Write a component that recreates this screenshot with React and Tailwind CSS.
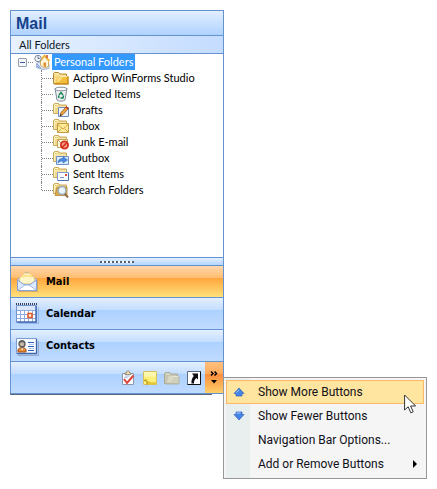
import React from "react";

function Folder({ faded }) {
  const back = faded ? "#c6c6b2" : "#f7dc8c";
  const front = faded ? "#d0cfba" : "#f3bd3c";
  const shade = faded ? "#b4b49f" : "#c98a1c";
  const edge = faded ? "#a5a996" : "#b5893c";
  return (
    <g>
      <path d="M.5 13.500V3.500l1-1h4l1.500 1.500h6.500v9.500z" fill={back} stroke={edge} />
      <path d="M2.500 13.500L4.500 6h10.500v7.500z" fill={front} />
      <path d="M15 6.500L15 14H1.500" fill="none" stroke={shade} strokeWidth={faded ? "1" : "1.500"} />
      <path d="M4.500 7L9 6.500h5M2 4h3.500" stroke={faded ? "#e6e6d8" : "#fff3bd"} />
      <path d="M3.500 12L5 7.500h5L6 12z" fill={faded ? "#dadac8" : "#fbdc82"} />
    </g>
  );
}

function SmallFolder() {
  return (
    <g>
      <path d="M.5 11.500V2.500l1-1h4l1 1.500h7v8.500z" fill="#f0d583" stroke="#c8aa60" />
      <path d="M1.500 3v8M2 2.500h3M2 5h11" stroke="#fdf2c4" />
    </g>
  );
}

const overlays = {
  drafts: (
    <g>
      <path d="M5.500 5.500h10v9h-10z" fill="#eef4ff" stroke="#6f8bc0" />
      <path d="M7 14l1-3.500L13.500 4.500l2 1.800L10 12.500z" fill="#f2a63a" stroke="#8a5427" strokeWidth=".8" />
      <path d="M13 5l2 1.800" stroke="#d5342c" strokeWidth="1.500" />
      <path d="M7 14l.6-2 1.200 1.200z" fill="#222" />
    </g>
  ),
  inbox: (
    <g>
      <path d="M4.500 5.500h11v9h-11z" fill="#ffec9a" stroke="#c39a3f" />
      <path d="M5 6.500l5 4.500L15 6.500M5 14l3.500-3.500M15 14l-3.500-3.500" fill="none" stroke="#d1a444" />
    </g>
  ),
  junk: (
    <g>
      <path d="M4.500 5.500h10v8h-10z" fill="#fff8dc" stroke="#c3a35c" />
      <path d="M5 6l4 4" stroke="#c7a55e" />
      <circle cx="11.500" cy="11" r="3.600" fill="#f4a48d" stroke="#d62f1c" strokeWidth="1.800" />
      <path d="M9 13.500l5-5" stroke="#d62f1c" strokeWidth="1.700" />
    </g>
  ),
  outbox: (
    <g>
      <path d="M3.500 6.500h12v8h-12z" fill="#dceaff" stroke="#6d91c9" />
      <path d="M5 13c0-3 1.500-4.500 5-4.500V6.500l4.500 3.500L10 13v-2c-2.500 0-3.800.5-5 2z" fill="#4c8ae0" stroke="#2f68b8" strokeWidth=".6" />
    </g>
  ),
  sent: (
    <g>
      <path d="M4.500 6.500h11v8h-11z" fill="#f9fbff" stroke="#7f9dd0" />
      <path d="M5 14.500h10.500V7" fill="none" stroke="#4c74b4" />
      <path d="M12 8h2v2h-2z" fill="#e34234" />
      <path d="M7 11.500h4" stroke="#7f95bd" />
    </g>
  ),
  search: (
    <g>
      <path d="M2 13.500L4 5h10v8.500z" fill="#d9aa4b" stroke="#b9893b" strokeWidth=".8" />
      <path d="M11.500 11.500l3.500 4" stroke="#8b6d4d" strokeWidth="2" />
      <circle cx="9" cy="8.500" r="3.900" fill="#e8f5ff" stroke="#93a5bd" strokeWidth="1.300" />
      <path d="M7.300 8.200c.2-1 .8-1.500 1.800-1.600" fill="none" stroke="#fff" />
    </g>
  ),
};

function TreeIcon({ kind }) {
  return (
    <svg className="size-4 shrink-0" viewBox="0 0 16 16" aria-hidden="true">
      {kind === "home" && (
        <g>
          <path d="M2.500 9.500l6-3 6.500 3v5l-6 1-6.500-2z" fill="#dce7fb" stroke="#8ba4d0" strokeWidth=".8" />
          <path d="M6.500 7l4-4.500L14.500 7v5.500l-4 1.500-4-2.500z" fill="#fff7dc" stroke="#c89b45" strokeWidth=".8" />
          <path d="M5.500 7.500l5-6 5 5.500" fill="none" stroke="#f0b42e" strokeWidth="1.700" />
          <path d="M13 1v3" stroke="#c9503b" strokeWidth="1.500" />
          <path d="M9.500 8.500h2.500V13l-2.500-.5z" fill="#e28b2c" />
          <circle cx="4" cy="4.500" r="3.200" fill="#f4f7fb" stroke="#7d8798" />
          <path d="M4 2.500v2h1.700" fill="none" stroke="#38445c" strokeWidth=".8" />
          <path d="M3 10l4 4.500M3 12.500l2 1.500" stroke="#6f8fc8" />
        </g>
      )}
      {kind === "folder" && <Folder />}
      {kind === "trash" && (
        <g>
          <path d="M2 2.500l2 11.500c1 1.500 7 1.500 8 0l2-11.500z" fill="#eceff1" stroke="#7f8b96" />
          <ellipse cx="8" cy="3" rx="6" ry="1.800" fill="#fff" stroke="#7f8b96" />
          <path d="M6 9l2-2.500L10 9M10.500 9.500l-.5 2.500H7.500M5.500 9.500L6 12" fill="none" stroke="#168353" strokeWidth="1.400" />
        </g>
      )}
      {overlays[kind] && (
        <g>
          <SmallFolder />
          {overlays[kind]}
        </g>
      )}
    </svg>
  );
}

function NavIcon({ kind }) {
  return (
    <svg className="size-6 shrink-0" viewBox="0 0 24 24" aria-hidden="true">
      {kind === "mail" && (
        <g>
          <path d="M4 21h19V9l-1-1v12H4z" fill="#a98a70" opacity=".5" />
          <path d="M2.500 8.500L12 1l9.500 7.500v11h-19z" fill="#c9dcfa" stroke="#8fa9d8" />
          <path d="M4.500 13V7l5-5h5l5 5v6z" fill="#fff6c8" stroke="#e8bd62" strokeWidth=".8" />
          <path d="M7 6c3-1.500 7-1.500 10 0" fill="none" stroke="#ffe18a" strokeWidth="2" />
          <path d="M2.500 9l6.500 4.500h6L21.500 9v10.500h-19z" fill="#dbe8ff" stroke="#86a2d8" />
          <path d="M3 19l7-5h4l7 5" fill="#fff" stroke="#a3b9e3" />
        </g>
      )}
      {kind === "calendar" && (
        <g>
          <path d="M4 21h20V4h-1v16H4z" fill="#7795c5" opacity=".5" />
          <path d="M1.500 2.500h20v17h-20z" fill="#fff" stroke="#7694cf" />
          <path d="M2 3h19v4H2z" fill="#dce7fa" />
          <path d="M1 1h21" stroke="#3d4250" strokeWidth="2" strokeDasharray="1 1" />
          <path d="M2 7.500h19M2 11.500h19M2 15.500h19M5.500 7v12M9.500 7v12M13.500 7v12M17.500 7v12" stroke="#8fabdf" />
          <path d="M2 19h20M21 3v16" stroke="#456db8" strokeWidth="1.500" />
          <path d="M13 10.500h4v4h-4z" fill="#fff0df" stroke="#e65a28" strokeWidth="1.600" />
        </g>
      )}
      {kind === "contacts" && (
        <g>
          <path d="M3 20h20V6h1v15H3z" fill="#8699b8" opacity=".7" />
          <path d="M1.500 3.500h20v15h-20z" fill="#f8fbff" stroke="#7b9bd1" />
          <path d="M2 18.500h19.500V4" fill="none" stroke="#3d65a9" strokeWidth="1.300" />
          <path d="M3 17v-2c0-3 8-3 8 0v2z" fill="#ec8c2c" stroke="#9a4b20" />
          <path d="M6 13.500l1 2 1.500-2" fill="#fff" />
          <circle cx="7" cy="9" r="3" fill="#c9b7a8" stroke="#555" strokeWidth="1.300" />
          <path d="M4.500 8c0-4 5-4 5 0-2-1.500-3-.5-5 0z" fill="#626262" />
          <path d="M13 7.500h6M13 11.500h6M13 15.500h6" stroke="#2f65c0" />
          <path d="M14 9.500h5M14 13.500h5" stroke="#b3caef" />
        </g>
      )}
    </svg>
  );
}

function ToolIcon({ kind }) {
  return (
    <svg className="size-4" viewBox="0 0 16 16" aria-hidden="true">
      {kind === "tasks" && (
        <g>
          <path d="M2.500 3.500h11v11h-11z" fill="#f9faff" stroke="#8e98ad" />
          <path d="M5 4.500V3h1.500c0-3 3-3 3 0H11v1.500z" fill="#efe2b5" stroke="#887d62" strokeWidth=".8" />
          <path d="M4 9l3 4 6.500-7.500" fill="none" stroke="#dd4535" strokeWidth="2" />
          <path d="M4.500 7.500h3M5 6h5" stroke="#adbed9" />
        </g>
      )}
      {kind === "notes" && (
        <g>
          <path d="M1.500 1.500h13v13h-13z" fill="#fff07c" stroke="#d3c062" />
          <path d="M2 2h12v4.500H2z" fill="#fff8ac" />
          <path d="M1.500 9.500c2 0 4 2 3.500 5h9.500V12C10 13 6 12 4 8.500z" fill="#e5c634" />
          <path d="M2 10.500c3 0 3 2 3 4" fill="none" stroke="#a58a1e" />
        </g>
      )}
      {kind === "folders" && <Folder faded />}
      {kind === "shortcuts" && (
        <g>
          <path d="M1.500 1.500h13v13h-13z" fill="#fff" stroke="#5b6a85" />
          <path d="M14.500 1.500v13h-13" fill="none" stroke="#111" />
          <path d="M6 3.500H12V9.500L10.300 8C8.500 9.500 8 11 8 13.500H5.500c-.3-3 .5-5.500 2.300-7.500z" fill="#0b0d12" />
        </g>
      )}
    </svg>
  );
}

const folders = [
  ["Actipro WinForms Studio", "folder"],
  ["Deleted Items", "trash"],
  ["Drafts", "drafts"],
  ["Inbox", "inbox"],
  ["Junk E-mail", "junk"],
  ["Outbox", "outbox"],
  ["Sent Items", "sent"],
  ["Search Folders", "search"],
];

const panes = [
  ["Mail", "mail"],
  ["Calendar", "calendar"],
  ["Contacts", "contacts"],
];

const blueBar =
  "bg-[linear-gradient(#e3efff_0%,#c4ddff_38%,#add1ff_40%,#c0dbff_100%)]";
const orangeBar =
  "bg-[linear-gradient(#ffd7ae_0%,#ffbd70_38%,#ffa73d_40%,#ffe17b_100%)]";

function FolderTree() {
  return (
    <ul role="tree" className="min-h-[203px] font-['Lato','Liberation_Sans',sans-serif] text-[11px] leading-4 text-black">
      <li role="treeitem" aria-expanded="true" aria-selected="true">
        <div className="flex h-4 items-center pl-[7px]">
          <button aria-label="Collapse Personal Folders" className="flex size-[9px] items-center justify-center rounded-[1px] border border-[#919fae] bg-[#f5f7fa]">
            <span className="h-px w-[5px] bg-[#3f55a5]" />
          </button>
          <span className="mr-px ml-px h-px w-[5px] border-t border-dotted border-[#808080]" />
          <TreeIcon kind="home" />
          <span className="ml-[2px] bg-[#3399ff] px-[2px] text-white">Personal Folders</span>
        </div>
        <ul role="group" className="pl-[30px]">
          {folders.map(([name, kind]) => (
            <li key={name} role="treeitem" className="group flex h-4 items-center">
              <span className="h-4 border-l border-dotted border-[#808080] group-last:h-2 group-last:self-start" />
              <span className="h-px w-[11px] border-t border-dotted border-[#808080]" />
              <TreeIcon kind={kind} />
              <span className="pl-1 whitespace-nowrap">{name}</span>
            </li>
          ))}
        </ul>
      </li>
    </ul>
  );
}

function Arrow({ down }) {
  return (
    <svg className="size-4" viewBox="0 0 16 16" aria-hidden="true">
      <path
        transform={down ? "rotate(180 8 8)" : undefined}
        d="M8 4L13 9.500H11V12H5V9.500H3z"
        fill="#4585e8"
        stroke="#2f60b8"
        strokeWidth=".7"
      />
      <path d={down ? "M5.500 5h4" : "M5.500 8.500L8 5.800"} stroke="#a9d0ff" />
    </svg>
  );
}

const commands = [
  ["Show More Buttons", <Arrow />],
  ["Show Fewer Buttons", <Arrow down />],
  ["Navigation Bar Options...", null],
  ["Add or Remove Buttons", null],
];

function OverflowMenu() {
  return (
    <div role="menu" className="absolute top-[15px] left-full z-10 w-[204px] border border-[#979797] bg-[linear-gradient(90deg,#f5f5f5_2px,#e9eeee_2px,#e9eeee_26px,#f5f5f5_26px)] p-[2px] font-['Roboto','Noto_Sans',sans-serif] text-[12px] text-[#101018]">
      {commands.map(([label, icon], i) => (
        <button
          key={label}
          role="menuitem"
          className={
            "flex h-6 w-full items-center border whitespace-nowrap " +
            (i === 0 ? "border-[#ffb768] bg-[#ffe5a0]" : "border-transparent")
          }
        >
          <span className="flex w-[31px] shrink-0 pl-1">{icon}</span>
          <span>{label}</span>
          {i === 3 && (
            <svg className="mr-[6px] ml-auto h-[8px] w-[4px]" viewBox="0 0 4 8" aria-hidden="true">
              <path d="M0 0l4 4-4 4z" fill="#000" />
            </svg>
          )}
        </button>
      ))}
      <svg className="pointer-events-none absolute top-[16px] left-[180px] h-[20px] w-[13px]" viewBox="0 0 13 20" aria-hidden="true">
        <path d="M.6 1v15l3.600-3.200 2.600 6 2.400-1-2.600-5.800h5z" fill="#fff" stroke="#333" />
      </svg>
    </div>
  );
}

export default function App() {
  return (
    <main className="min-h-screen bg-white p-[10px]">
      <section className="w-[214px] border border-[#6593cf] bg-white">
        <h1 className="h-[25px] border-b border-[#6593cf] bg-[linear-gradient(#e3efff,#afd2ff)] pl-[5px] font-['Liberation_Sans',sans-serif] text-[16px] leading-[25px] font-bold text-[#15428b]">
          Mail
        </h1>
        <h2 className="h-[18px] border-b border-[#6593cf] bg-[linear-gradient(90deg,#e8f2ff,#c4dcff)] pl-2 font-['Lato','Liberation_Sans',sans-serif] text-[11px] leading-[18px] text-[#101828]">
          All Folders
        </h2>
        <FolderTree />
        <div className="flex h-[9px] items-center justify-center border-y border-[#6593cf] bg-[linear-gradient(#e3efff,#b3d4ff)]">
          <span className="h-[2px] w-[34px] bg-[repeating-linear-gradient(90deg,#555f70_0_2px,#f6faff_2px_4px)]" />
        </div>
        <nav>
          {panes.map(([name, kind]) => (
            <button
              key={name}
              className={
                "flex h-8 w-full items-center gap-[7px] border-b border-[#6593cf] pt-[2px] pl-1 font-['DejaVu_Sans_Condensed','DejaVu_Sans',sans-serif] text-[11px] font-bold text-black " +
                (kind === "mail" ? orangeBar : blueBar)
              }
            >
              <NavIcon kind={kind} />
              {name}
            </button>
          ))}
        </nav>
        <div className={"flex h-[31px] items-center justify-end " + blueBar}>
          <div className="flex gap-[6px] pr-[3px]">
            <button aria-label="Tasks"><ToolIcon kind="tasks" /></button>
            <button aria-label="Notes"><ToolIcon kind="notes" /></button>
            <button aria-label="Folder List"><ToolIcon kind="folders" /></button>
            <button aria-label="Shortcuts"><ToolIcon kind="shortcuts" /></button>
          </div>
          <div className="relative h-full w-[18px]">
            <button aria-label="Configure buttons" aria-haspopup="menu" aria-expanded="true" className="flex size-full items-center justify-center bg-[linear-gradient(#ffc07d_0%,#ffab5c_38%,#fb8c3c_40%,#fecf6a_100%)]">
              <svg className="h-[13px] w-[8px]" viewBox="0 0 8 13" aria-hidden="true">
                <path d="M1 .5l2 2-2 2M4.500.5l2 2-2 2" fill="none" stroke="#000" strokeWidth="1.500" />
                <path d="M1 9h6L4 12.500z" fill="#000" />
              </svg>
            </button>
            <OverflowMenu />
          </div>
        </div>
      </section>
      <div className="h-px w-[202px] bg-[#5a6b80]" />
    </main>
  );
}
